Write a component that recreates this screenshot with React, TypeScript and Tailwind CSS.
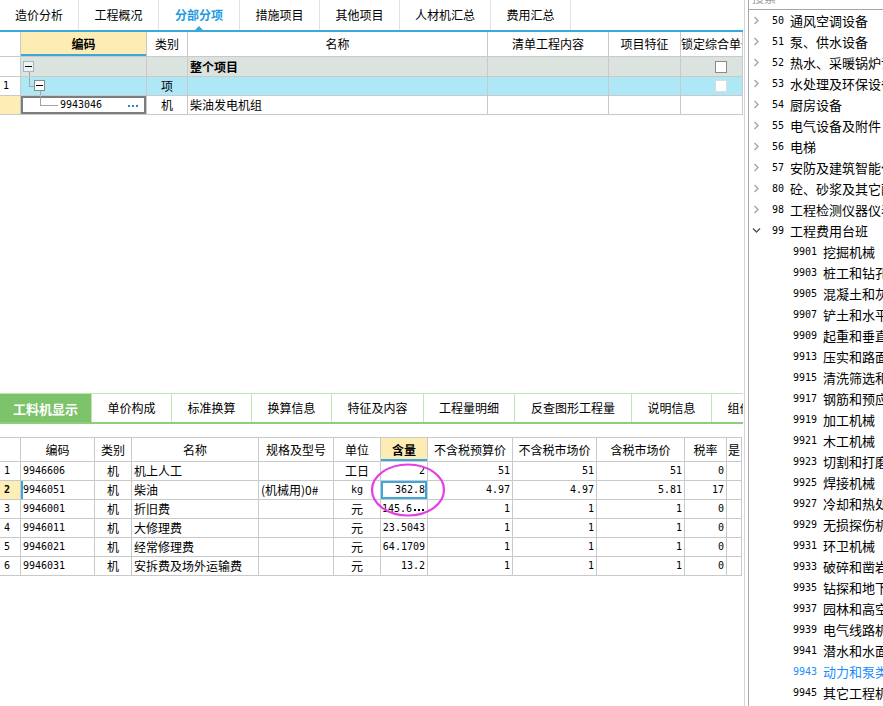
import React from 'react';

const mono = "font-['DejaVu_Sans_Mono',monospace] text-[10px]";
const cell = 'relative flex items-center overflow-hidden whitespace-nowrap border-b border-r border-[#c9c9c9]';
const topCols = 'grid grid-cols-[21px_126px_41px_300px_121px_72px_62px] w-[743px]';
const botCols =
  'grid grid-cols-[21px_74px_37px_127px_75px_47px_47px_85px_84px_88px_42px_15px] w-[742px]';

const topTabs = [
  { label: '造价分析', w: 'w-[79px]' },
  { label: '工程概况', w: 'w-[80px]' },
  { label: '分部分项', w: 'w-[81px]', active: true },
  { label: '措施项目', w: 'w-[80px]' },
  { label: '其他项目', w: 'w-[80px]' },
  { label: '人材机汇总', w: 'w-[91px]' },
  { label: '费用汇总', w: 'w-[80px]' },
];

const bottomTabs = [
  { label: '工料机显示', w: 'w-[92px]', active: true },
  { label: '单价构成', w: 'w-[80px]' },
  { label: '标准换算', w: 'w-[80px]' },
  { label: '换算信息', w: 'w-[80px]' },
  { label: '特征及内容', w: 'w-[92px]' },
  { label: '工程量明细', w: 'w-[91px]' },
  { label: '反查图形工程量', w: 'w-[117px]' },
  { label: '说明信息', w: 'w-[80px]' },
  { label: '组价方案', w: 'w-[80px]' },
];

const rows = [
  { code: '9946606', name: '机上人工', spec: '', unit: '工日', qty: '2', p1: '51', p2: '51', p3: '51', tax: '0' },
  { code: '9946051', name: '柴油', spec: '(机械用)0#', unit: 'kg', qty: '362.8', p1: '4.97', p2: '4.97', p3: '5.81', tax: '17' },
  { code: '9946001', name: '折旧费', spec: '', unit: '元', qty: '145.6', more: true, p1: '1', p2: '1', p3: '1', tax: '0' },
  { code: '9946011', name: '大修理费', spec: '', unit: '元', qty: '23.5043', p1: '1', p2: '1', p3: '1', tax: '0' },
  { code: '9946021', name: '经常修理费', spec: '', unit: '元', qty: '64.1709', p1: '1', p2: '1', p3: '1', tax: '0' },
  { code: '9946031', name: '安拆费及场外运输费', spec: '', unit: '元', qty: '13.2', p1: '1', p2: '1', p3: '1', tax: '0' },
];

const groups = [
  ['50', '通风空调设备'],
  ['51', '泵、供水设备'],
  ['52', '热水、采暖锅炉设备'],
  ['53', '水处理及环保设备'],
  ['54', '厨房设备'],
  ['55', '电气设备及附件'],
  ['56', '电梯'],
  ['57', '安防及建筑智能化'],
  ['80', '砼、砂浆及其它配合比'],
  ['98', '工程检测仪器仪表'],
];

const machines = [
  ['9901', '挖掘机械'],
  ['9903', '桩工和钻孔机械'],
  ['9905', '混凝土和灰浆机械'],
  ['9907', '铲土和水平运输'],
  ['9909', '起重和垂直运输'],
  ['9913', '压实和路面机械'],
  ['9915', '清洗筛选和破碎'],
  ['9917', '钢筋和预应力机械'],
  ['9919', '加工机械'],
  ['9921', '木工机械'],
  ['9923', '切割和打磨机械'],
  ['9925', '焊接机械'],
  ['9927', '冷却和热处理'],
  ['9929', '无损探伤机械'],
  ['9931', '环卫机械'],
  ['9933', '破碎和凿岩机械'],
  ['9935', '钻探和地下工程'],
  ['9937', '园林和高空作业'],
  ['9939', '电气线路机械'],
  ['9941', '潜水和水面机械'],
  ['9943', '动力和泵类机械'],
  ['9945', '其它工程机械'],
];

function MinusBox({ className }: { className: string }) {
  return (
    <span className={`absolute flex h-[11px] w-[11px] items-center justify-center border ${className}`}>
      <span className="h-px w-[7px] bg-black" />
    </span>
  );
}

function Dots({ color }: { color: string }) {
  return (
    <span className="flex gap-[2px]">
      <span className={`h-[2px] w-[2px] ${color}`} />
      <span className={`h-[2px] w-[2px] ${color}`} />
      <span className={`h-[2px] w-[2px] ${color}`} />
    </span>
  );
}

function Chevron({ open }: { open?: boolean }) {
  return (
    <svg width="9" height="9" viewBox="0 0 9 9" fill="none">
      <path
        d={open ? 'M1 2.5 L4.5 6 L8 2.5' : 'M2.5 1 L6 4.5 L2.5 8'}
        stroke={open ? '#555' : '#a6a6a6'}
        strokeWidth="1.4"
      />
    </svg>
  );
}

function TopTable() {
  return (
    <div className={topCols}>
      {/* header */}
      <div className={`${cell} h-[25px]`} />
      <div className={`${cell} h-[25px] justify-center bg-[#fdecb3] font-bold shadow-[inset_0_-2px_0_#3aa8dc]`}>编码</div>
      <div className={`${cell} h-[25px] justify-center`}>类别</div>
      <div className={`${cell} h-[25px] justify-center`}>名称</div>
      <div className={`${cell} h-[25px] justify-center`}>清单工程内容</div>
      <div className={`${cell} h-[25px] justify-center`}>项目特征</div>
      <div className={`${cell} h-[25px] justify-start`}>锁定综合单价</div>

      {/* 整个项目 */}
      <div className={`${cell} h-[20px]`} />
      <div className={`${cell} h-[20px] bg-[#dbe3df]`}>
        <MinusBox className="left-[2px] top-[4px] border-[#9fb8c4] bg-[#eef4f6]" />
        <span className="absolute left-[8px] top-[15px] bottom-[-1px] w-px bg-[#a3a3a3]" />
      </div>
      <div className={`${cell} h-[20px] bg-[#dbe3df]`} />
      <div className={`${cell} h-[20px] bg-[#dbe3df] pl-[2px] font-bold`}>整个项目</div>
      <div className={`${cell} h-[20px] bg-[#dbe3df]`} />
      <div className={`${cell} h-[20px] bg-[#dbe3df]`} />
      <div className={`${cell} h-[20px] bg-[#dbe3df] pl-[34px]`}>
        <span className="h-[12px] w-[12px] border border-[#8a8a8a] bg-white" />
      </div>

      {/* row 1 */}
      <div className={`${cell} h-[19px] pl-[3px] ${mono}`}>1</div>
      <div className={`${cell} h-[19px] bg-[#aee8f7]`}>
        <span className="absolute left-[8px] top-0 h-[9px] w-px bg-[#a3a3a3]" />
        <span className="absolute left-[8px] top-[9px] h-px w-[6px] bg-[#a3a3a3]" />
        <MinusBox className="left-[13px] top-[3px] border-[#8a8a8a] bg-white" />
        <span className="absolute left-[19px] top-[14px] bottom-[-1px] w-px bg-[#a3a3a3]" />
      </div>
      <div className={`${cell} h-[19px] justify-center bg-[#aee8f7]`}>项</div>
      <div className={`${cell} h-[19px] bg-[#aee8f7]`} />
      <div className={`${cell} h-[19px] bg-[#aee8f7]`} />
      <div className={`${cell} h-[19px] bg-[#aee8f7]`} />
      <div className={`${cell} h-[19px] bg-[#aee8f7] pl-[34px]`}>
        <span className="h-[12px] w-[12px] border border-[#dcdcdc] bg-white" />
      </div>

      {/* row 2 */}
      <div className={`${cell} h-[19px] bg-[#fdeeb5]`} />
      <div className={`${cell} h-[19px] shadow-[inset_0_0_0_2px_#7d7d7d]`}>
        <span className="absolute left-[19px] top-0 h-[9px] w-px bg-[#a3a3a3]" />
        <span className="absolute left-[19px] top-[9px] h-px w-[18px] bg-[#a3a3a3]" />
        <span className={`absolute left-[39px] ${mono}`}>9943046</span>
        <span className="absolute left-[107px] top-[9px]">
          <Dots color="bg-[#2f80d0]" />
        </span>
      </div>
      <div className={`${cell} h-[19px] justify-center`}>机</div>
      <div className={`${cell} h-[19px] pl-[2px]`}>柴油发电机组</div>
      <div className={`${cell} h-[19px]`} />
      <div className={`${cell} h-[19px]`} />
      <div className={`${cell} h-[19px]`} />
    </div>
  );
}

function BottomTable() {
  const head = ['', '编码', '类别', '名称', '规格及型号', '单位', '含量', '不含税预算价', '不含税市场价', '含税市场价', '税率', '是'];
  return (
    <div className="relative">
      <div className={`${botCols} border-t border-[#c9c9c9]`}>
        {head.map((h, i) =>
          i === 6 ? (
            <div key={i} className={`${cell} h-[24px] justify-center bg-[#fdecb3] font-bold shadow-[inset_0_-2px_0_#3aa8dc]`}>
              {h}
            </div>
          ) : (
            <div key={i} className={`${cell} h-[24px] justify-center`}>
              {h}
            </div>
          ),
        )}
        {rows.map((r, i) => {
          const sel = i === 1;
          return (
            <React.Fragment key={r.code}>
              <div className={`${cell} h-[19px] pl-[4px] ${mono} ${sel ? 'bg-[#fdeeb5] font-bold' : ''}`}>{i + 1}</div>
              <div className={`${cell} h-[19px] pl-[2px] ${mono} ${sel ? 'shadow-[inset_2px_0_0_#3aa8dc]' : ''}`}>{r.code}</div>
              <div className={`${cell} h-[19px] justify-center`}>机</div>
              <div className={`${cell} h-[19px] pl-[2px]`}>{r.name}</div>
              <div className={`${cell} h-[19px] pl-[2px]`}>{r.spec}</div>
              <div className={`${cell} h-[19px] justify-center ${r.unit === 'kg' ? mono : ''}`}>{r.unit}</div>
              {r.more ? (
                <div className={`${cell} h-[19px] gap-[2px] pl-[1px] ${mono}`}>
                  {r.qty}
                  <span className="mt-[2px]">
                    <Dots color="bg-black" />
                  </span>
                </div>
              ) : (
                <div
                  className={`${cell} h-[19px] justify-end pr-[2px] ${mono} ${
                    sel ? 'shadow-[inset_0_0_0_2px_#3aa8dc]' : ''
                  }`}
                >
                  {r.qty}
                </div>
              )}
              <div className={`${cell} h-[19px] justify-end pr-[2px] ${mono}`}>{r.p1}</div>
              <div className={`${cell} h-[19px] justify-end pr-[2px] ${mono}`}>{r.p2}</div>
              <div className={`${cell} h-[19px] justify-end pr-[2px] ${mono}`}>{r.p3}</div>
              <div className={`${cell} h-[19px] justify-end pr-[2px] ${mono}`}>{r.tax}</div>
              <div className={`${cell} h-[19px]`} />
            </React.Fragment>
          );
        })}
      </div>
      <svg className="absolute left-[370px] top-[26px]" width="78" height="56" viewBox="0 0 78 56" fill="none">
        <ellipse cx="38" cy="27" rx="36" ry="25.5" stroke="#e63ee6" strokeWidth="2.2" />
      </svg>
    </div>
  );
}

export default function App() {
  return (
    <div className="flex h-[706px] w-[883px] overflow-hidden bg-white text-[12px] leading-none text-black font-['Noto_Sans_CJK_SC',sans-serif]">
      <div className="flex w-[745px] shrink-0 flex-col border-r border-[#d4d4d4]">
        <div className="flex h-[30px] shrink-0">
          {topTabs.map((t) => (
            <div
              key={t.label}
              className={`relative flex items-center justify-center border-r border-[#e2e2e2] ${t.w} ${
                t.active ? 'font-bold text-[#1e9be0]' : ''
              }`}
            >
              {t.label}
              {t.active && (
                <span className="absolute bottom-0 left-1/2 h-0 w-0 -translate-x-1/2 border-x-[4px] border-b-[4px] border-x-transparent border-b-[#3aa8dc]" />
              )}
            </div>
          ))}
        </div>
        <div className="h-[2px] w-[743px] shrink-0 bg-[#3aa8dc]" />
        <TopTable />
        <div className="flex-1" />
        <div className="h-[313px] shrink-0">
          <div className="flex h-[31px] w-[743px] overflow-hidden border-t border-b-2 border-t-[#bfe5b0] border-b-[#8fce7b]">
            {bottomTabs.map((t) => (
              <div
                key={t.label}
                className={`flex shrink-0 items-center justify-center border-r border-[#bfe5b0] ${t.w} ${
                  t.active ? 'bg-[#7dc36a] text-[13px] font-bold text-white' : ''
                }`}
              >
                {t.label}
              </div>
            ))}
          </div>
          <div className="h-[13px]" />
          <BottomTable />
        </div>
      </div>

      <div className="flex-1 pl-[3px]">
        <div className="flex h-full flex-col border-l border-[#a7a7a7]">
          <div className="h-[10px] shrink-0 overflow-hidden border-b border-[#a7a7a7] pl-[3px] text-[#9a9a9a]">
            <div className="-mt-[8px]">搜索</div>
          </div>
          <div className="overflow-hidden whitespace-nowrap">
            {groups.map(([code, name]) => (
              <div key={code} className="flex h-[21px] items-center">
                <span className="flex w-[23px] pl-[3px]">
                  <Chevron />
                </span>
                <span className={`w-[18px] ${mono}`}>{code}</span>
                <span className="text-[13px]">{name}</span>
              </div>
            ))}
            <div className="flex h-[21px] items-center">
              <span className="flex w-[23px] pl-[3px]">
                <Chevron open />
              </span>
              <span className={`w-[18px] ${mono}`}>99</span>
              <span className="text-[13px]">工程费用台班</span>
            </div>
            {machines.map(([code, name]) => {
              const hi = code === '9943';
              return (
                <div key={code} className={`flex h-[21px] items-center pl-[44px] ${hi ? 'text-[#1a8cff]' : ''}`}>
                  <span className={`w-[30px] ${mono}`}>{code}</span>
                  <span className="text-[13px]">{name}</span>
                </div>
              );
            })}
          </div>
        </div>
      </div>
    </div>
  );
}
